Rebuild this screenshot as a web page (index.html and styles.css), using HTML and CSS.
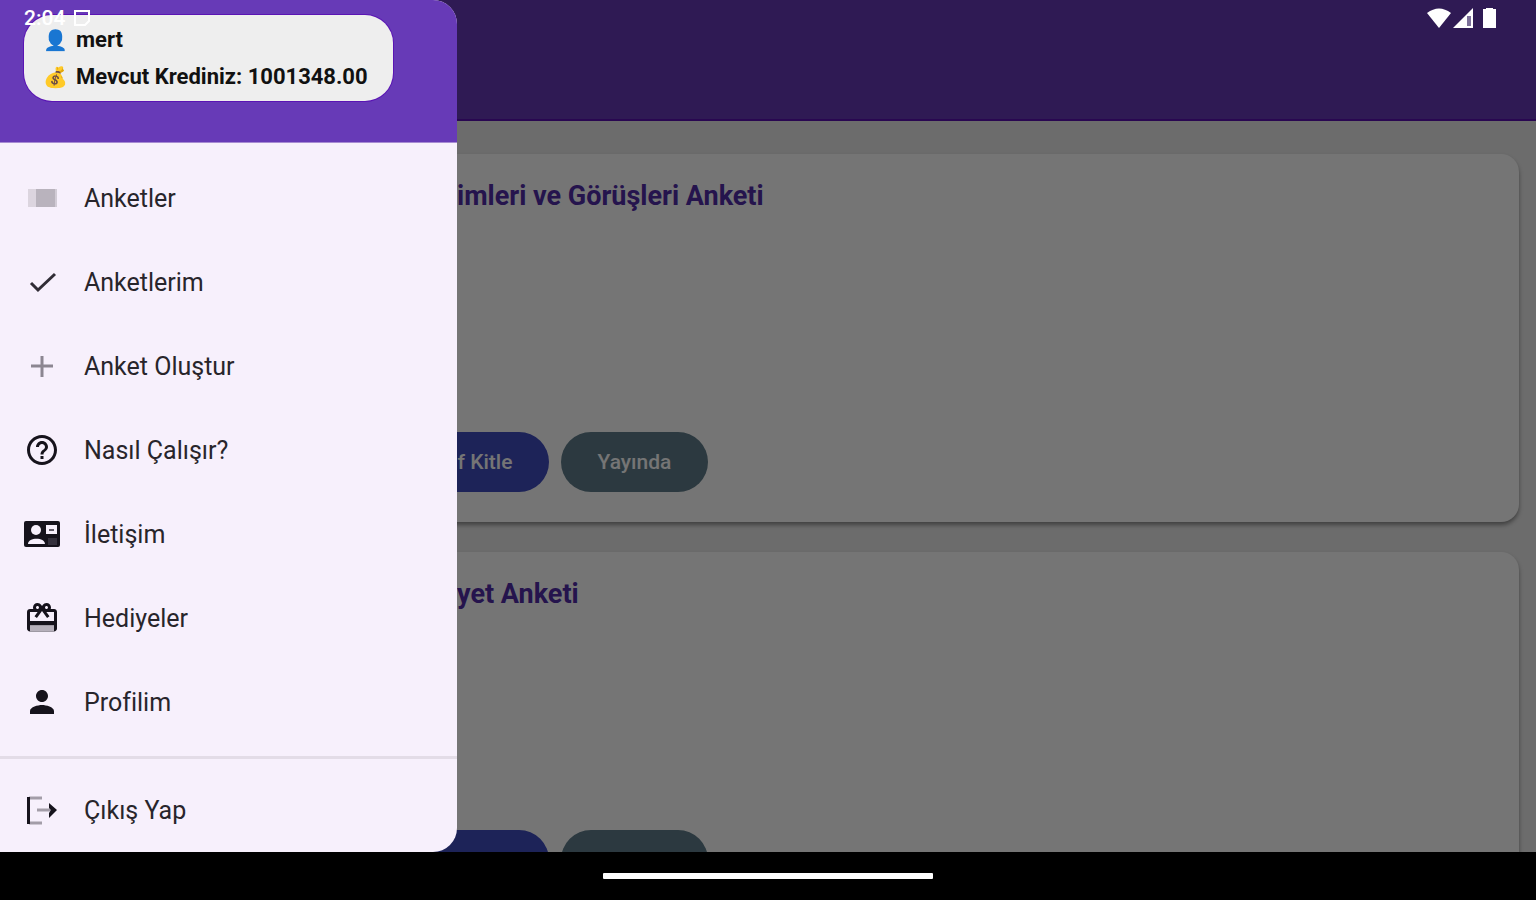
FILE: index.html
```html
<!DOCTYPE html>
<html lang="tr">
<head>
    <meta charset="UTF-8" />
    <meta name="viewport" content="width=device-width, initial-scale=1" />
    <title>Anketler</title>
    <link rel="stylesheet" href="styles.css">
</head>
<body>

<div class="screen">
    <header class="app-bar"></header>

    <main class="survey-list">
        <article class="card">
            <h2>imleri ve Görüşleri Anketi</h2>
            <div class="actions">
                <button class="btn-target">f Kitle</button>
                <button class="btn-live">Yayında</button>
            </div>
        </article>
        <article class="card">
            <h2>yet Anketi</h2>
            <div class="actions">
                <button class="btn-target" aria-label="Kitle"></button>
                <button class="btn-live" aria-label="Yayında"></button>
            </div>
        </article>
    </main>

    <div class="scrim"></div>

    <aside class="drawer">
        <div class="drawer-header">
            <div class="user-box">
                <div class="user-row"><span class="emoji" aria-hidden="true">👤</span>mert</div>
                <div class="user-row"><span class="emoji" aria-hidden="true">💰</span>Mevcut Krediniz: 1001348.00</div>
            </div>
        </div>
        <nav class="menu">
            <a href="#">
                <svg viewBox="0 0 36 36"><path fill="#dcd5df" d="M4 9h8v18H4z"/><path fill="#b9b3bd" d="M12 9h19v18H12z"/><path fill="#d2ccd6" d="M31 9h2v18h-2z"/></svg>
                Anketler
            </a>
            <a href="#">
                <svg viewBox="0 0 36 36"><path fill="none" stroke="#302c35" stroke-width="3" d="M7 19l7 7L31 10"/></svg>
                Anketlerim
            </a>
            <a href="#">
                <svg viewBox="0 0 36 36"><path fill="none" stroke="#8c8691" stroke-width="3" d="M18 8v21M7 18h22"/></svg>
                Anket Oluştur
            </a>
            <a href="#">
                <svg viewBox="0 0 24 24"><path d="M11 18h2v-2h-2v2zm1-16C6.480 2 2 6.480 2 12s4.480 10 10 10 10-4.480 10-10S17.520 2 12 2zm0 18c-4.410 0-8-3.590-8-8s3.590-8 8-8 8 3.590 8 8-3.590 8-8 8zm0-14c-2.210 0-4 1.790-4 4h2c0-1.100.9-2 2-2s2 .9 2 2c0 2-3 1.750-3 5h2c0-2.250 3-2.500 3-5 0-2.210-1.790-4-4-4z"/></svg>
                Nasıl Çalışır?
            </a>
            <a href="#">
                <svg viewBox="0 0 36 36"><rect x="0" y="5" width="36" height="26" rx="2"/><circle cx="12" cy="14" r="5" fill="#f7f0fc"/><path fill="#f7f0fc" d="M4 28c0-7 17-7 17 0zM22 9h11v9H22z"/><path stroke="#625d69" stroke-width="2" d="M25 14h5"/><path fill="#35313d" d="M24 22h9v7h-9z"/></svg>
                İletişim
            </a>
            <a href="#">
                <svg viewBox="0 0 24 24"><path d="M20 6h-2.180c.11-.31.18-.65.18-1 0-1.660-1.340-3-3-3-1.050 0-1.960.54-2.500 1.350l-.5.67-.5-.68C10.960 2.540 10.050 2 9 2 7.340 2 6 3.340 6 5c0 .35.07.69.18 1H4c-1.110 0-1.990.89-1.990 2L2 19c0 1.110.89 2 2 2h16c1.110 0 2-.89 2-2V8c0-1.110-.89-2-2-2zm-5-2c.55 0 1 .45 1 1s-.45 1-1 1-1-.45-1-1 .45-1 1-1zM9 4c.55 0 1 .45 1 1s-.45 1-1 1-1-.45-1-1 .45-1 1-1zm11 15H4v-2h16v2zm0-5H4V8h5.080L7 10.830 8.620 12 12 7.400l3.380 4.600L17 10.830 14.920 8H20v6z"/><path fill="#b6b0bb" d="M4 17h16v4H4z"/></svg>
                Hediyeler
            </a>
            <a href="#">
                <svg viewBox="0 0 24 24"><path d="M12 12c2.210 0 4-1.790 4-4s-1.790-4-4-4-4 1.790-4 4 1.790 4 4 4zm0 2c-2.670 0-8 1.340-8 4v2h16v-2c0-2.660-5.330-4-8-4z"/></svg>
                Profilim
            </a>
            <hr>
            <a href="#">
                <svg viewBox="0 0 36 36"><path fill="none" stroke="#a39da8" stroke-width="3" d="M5 6h13M5 31h13M13 18h14"/><path d="M3 5h3v27H3z"/><path d="M25 11l8 7-8 8v-5l2-3-2-2z"/></svg>
                Çıkış Yap
            </a>
        </nav>
    </aside>

    <div class="status-bar">
        <div class="status-left">
            <span>2:04</span>
            <svg width="18" height="18" viewBox="0 0 18 18"><path fill="none" stroke="#fff" stroke-width="2" d="M2 2h14v10l-4 4H2z"/></svg>
        </div>
        <div class="status-right">
            <svg width="24" height="20" viewBox="0 0 24 20"><path fill="#fff" d="M0 5Q12-4 24 5L12 20z"/></svg>
            <svg width="20" height="20" viewBox="0 0 20 20"><path fill="#fff" d="M0 20L20 0v20z"/><path fill="#7d719a" d="M14 8h4v10h-4z"/></svg>
            <svg class="battery" width="13" height="20" viewBox="0 0 13 20"><path fill="#fff" d="M3 0h7v1h3v19H0V1h3z"/></svg>
        </div>
    </div>
</div>

<div class="nav-bar"><div class="home-pill"></div></div>

</body>
</html>
```
FILE: styles.css
```css
* {
  box-sizing: border-box;
}
body {
  margin: 0;
  height: 100vh;
  display: flex;
  flex-direction: column;
  background: #000;
  color: #1d1b20;
  font-family: Roboto, sans-serif;
  font-size: 25px;
}
.screen {
  flex: 1;
  min-height: 0;
  position: relative;
  overflow: hidden;
  background: #ebebeb;
}
.app-bar {
  height: 121px;
  background: #673ab7;
  border-bottom: 2px solid #5a10b0;
}
.survey-list {
  display: flex;
  flex-direction: column;
  gap: 30px;
  padding: 33px 17px;
}
.card {
  min-height: 368px;
  display: flex;
  flex-direction: column;
  justify-content: space-between;
  padding: 26px 24px 30px 404px;
  border-radius: 18px;
  background: #fff;
  box-shadow: 0 3px 4px rgba(0, 0, 0, 0.4);
}
.card h2 {
  margin: 0;
  padding-left: 36px;
  font-size: 27px;
  line-height: 32px;
  font-weight: 700;
  color: #512da8;
}
.actions {
  display: flex;
  gap: 12px;
}
.actions button {
  height: 60px;
  padding: 0 36px;
  border: none;
  border-radius: 30px;
  color: white;
  font-family: inherit;
  font-size: 21px;
  font-weight: 500;
}
.actions .btn-target {
  min-width: 128px;
  background: #3f4cc0;
}
.actions .btn-live {
  min-width: 147px;
  background: #607d8b;
}

/* drawer over the list */
.scrim {
  position: absolute;
  inset: 0;
  background: rgba(0, 0, 0, 0.54);
}
.drawer {
  position: absolute;
  top: 0;
  bottom: 0;
  left: 0;
  width: 457px;
  overflow: hidden;
  border-radius: 0 24px 24px 0;
  background: #f7f0fc;
}
.drawer-header {
  height: 143px;
  padding: 15px 24px;
  background: #673ab7;
  border-bottom: 1px solid #a78bd3;
}
.user-box {
  display: inline-block;
  min-width: 369px;
  padding: 6px 18px;
  border-radius: 28px;
  background: #eee;
  box-shadow: 0 0 0 1px #5a14b4;
}
.user-row {
  display: flex;
  align-items: center;
  gap: 8px;
  height: 37px;
  color: #111;
  font-size: 22px;
  font-weight: 700;
  white-space: nowrap;
}
.emoji {
  width: 26px;
  font-size: 20px;
  text-align: center;
}
.menu {
  padding-top: 13px;
}
.menu a {
  display: flex;
  align-items: center;
  gap: 24px;
  height: 84px;
  padding: 0 24px;
  color: #28252b;
  text-decoration: none;
}
.menu svg {
  width: 36px;
  height: 36px;
  fill: #16131c;
}
.menu hr {
  margin: 12px 0 9px;
  border: none;
  border-top: 3px solid #e3dce7;
}

/* system bars */
.status-bar {
  position: absolute;
  top: 0;
  left: 0;
  right: 0;
  height: 36px;
  display: flex;
  align-items: center;
  justify-content: space-between;
  padding: 0 40px 0 24px;
  color: white;
  font-size: 21px;
  font-weight: 500;
}
.status-left,
.status-right {
  display: flex;
  align-items: center;
}
.status-left {
  gap: 8px;
}
.status-right {
  gap: 2px;
}
.battery {
  margin-left: 8px;
}
.nav-bar {
  height: 48px;
  display: flex;
  align-items: center;
  justify-content: center;
}
.home-pill {
  width: 330px;
  height: 6px;
  border-radius: 1px;
  background: white;
}
```
